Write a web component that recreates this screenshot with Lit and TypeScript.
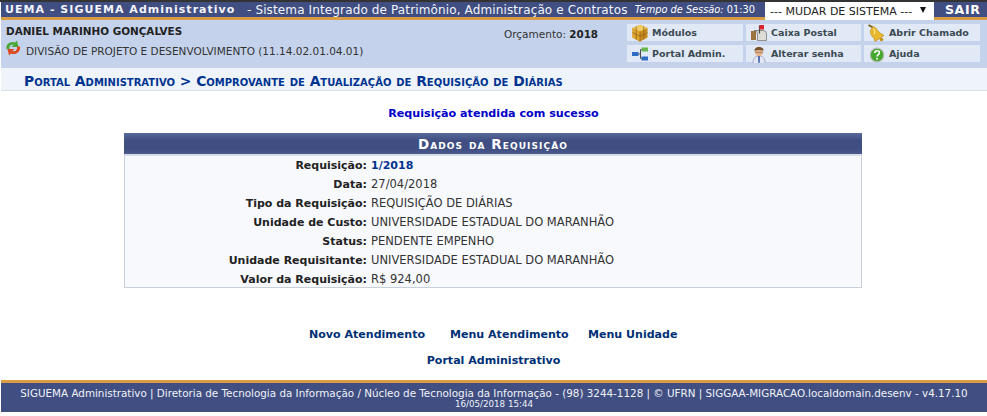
import { LitElement, html, css, svg } from "lit";
import { customElement } from "lit/decorators.js";

const icons: Record<string, unknown> = {
  box: svg`<path d="M1.500 4 9 .8 16.500 4v9.500L9 17.500l-7.500-4z" fill="#c98a1c"/><path d="M1.500 4 9 7.500v10l-7.500-4z" fill="#e0a52c"/><path d="M1.500 4 9 .8 16.500 4 9 7.500z" fill="#f0cc66"/><path d="M9 7.500v10M1.500 8.700 9 12.300l7.500-3.600M5.200 2.400v13.100M12.800 2.400v13.100" stroke="#94641a" stroke-width=".8" fill="none"/>`,
  mail: svg`<rect x="1" y="7" width="5" height="9" fill="#9b7440"/><path d="M4 6.500h9a3.500 3.500 0 0 1 3.500 3.500v6.500H7.500V10A3.500 3.500 0 0 0 4 6.500z" fill="#dcdcd8" stroke="#6f6b64" stroke-width=".7"/><path d="M9.500 1.500v8" stroke="#444" stroke-width="1.200"/><path d="M9.500 1h4.500v4.500H9.500z" fill="#d8262c"/>`,
  bell: svg`<path d="M.5 1 5 3.500" stroke="#7c5d18" stroke-width="2"/><path d="M4.500 3c3.500-.5 4.500 3 6.500 5s3.500 2 5 3.500L7 17.500c-.5-2-1-3.500-3-5.500S1.500 7 4.500 3z" fill="#e8b92f" stroke="#b78412" stroke-width=".6"/><path d="M5 5c1.500 0 2 2 1.500 5" stroke="#f8e48c" stroke-width="1.200" fill="none"/><circle cx="13.500" cy="15.500" r="1.800" fill="#c8921a"/>`,
  net: svg`<rect x="1" y="7" width="6.500" height="4" fill="#2f6cc6"/><rect x="10.500" y="2.500" width="6.500" height="4" fill="#68b850"/><rect x="10.500" y="11.500" width="6.500" height="4" fill="#2f6cc6"/><path d="M7.500 9h2M9.500 4.500v9h1M9.500 4.500h1" stroke="#3c3c3c" stroke-width=".9" fill="none"/>`,
  user: svg`<path d="M3 18.500c0-5 2-7.500 6-7.500s6 2.500 6 7.500z" fill="#e4e8f6" stroke="#7b83a8" stroke-width=".6"/><path d="M8 11h2l-.4 7.500H8.400z" fill="#3f5cab"/><ellipse cx="9" cy="6.500" rx="4.200" ry="4.800" fill="#e8b48a"/><path d="M4.500 6C4 .8 14 .5 13.500 5.500 10 5 8 4.500 4.500 6z" fill="#73522f"/><path d="M5 7.300h8" stroke="#5c5c5c" stroke-width=".6"/>`,
  help: svg`<circle cx="9" cy="10" r="6.800" fill="#46a82e" stroke="#b8bdb5" stroke-width="1.200"/><path d="M6.800 8c0-3 4.600-3 4.600-.2 0 2-2.300 1.800-2.300 3.800" stroke="#fff" stroke-width="1.600" fill="none"/><circle cx="9" cy="13.800" r="1" fill="#fff"/>`,
};

const menu = [
  ["box", "Módulos"],
  ["mail", "Caixa Postal"],
  ["bell", "Abrir Chamado"],
  ["net", "Portal Admin."],
  ["user", "Alterar senha"],
  ["help", "Ajuda"],
];

const rows: [string, string, boolean?][] = [
  ["Requisição:", "1/2018", true],
  ["Data:", "27/04/2018"],
  ["Tipo da Requisição:", "REQUISIÇÃO DE DIÁRIAS"],
  ["Unidade de Custo:", "UNIVERSIDADE ESTADUAL DO MARANHÃO"],
  ["Status:", "PENDENTE EMPENHO"],
  ["Unidade Requisitante:", "UNIVERSIDADE ESTADUAL DO MARANHÃO"],
  ["Valor da Requisição:", "R$ 924,00"],
];

@customElement("app-root")
export class AppRoot extends LitElement {
  static styles = css`
    :host {
      display: block;
      width: 987px;
      height: 416px;
      overflow: hidden;
      background: #fff;
      font-family: Verdana, "DejaVu Sans", sans-serif;
      font-size: 11px;
      color: #222;
    }
    .page { padding-left: 1px; border-top: 2px solid #333; display: flex; flex-direction: column; }
    .topbar {
      height: 15px;
      background: #404e82;
      border-bottom: 3px solid #d99c45;
      display: flex;
      align-items: center;
      color: #fff;
      white-space: nowrap;
    }
    .brand { font-weight: bold; font-size: 11px; letter-spacing: 1.030px; margin-left: 4px; width: 242px; color: #f2f4fa; }
    .subtitle { font-size: 12px; letter-spacing: .13px; width: 382px; color: #f2f4fa; }
    .timer { font-size: 9.800px; width: 126px; text-align: right; color: #fff; }
    .timer i { font-style: italic; }
    .select {
      width: 169px; margin-left: 10px; height: 18px; background: #fff; color: #222; font-size: 11px;
      display: flex; align-items: center; justify-content: space-between; padding: 0 5px; box-sizing: border-box;
      align-self: flex-start;
    }
    .arrow { width: 0; height: 0; border-left: 3px solid transparent; border-right: 3px solid transparent; border-top: 6px solid #111; margin-right: 3px; margin-top: -3px; }
    .exit { font-weight: bold; font-size: 12.500px; margin-left: 11px; letter-spacing: .6px; }
    .info {
      height: 48px;
      background: #c4d2eb;
      display: flex;
      position: relative;
    }
    .user { width: 500px; padding: 5px 0 0 5px; box-sizing: border-box; }
    .user b { display: block; font-size: 10.400px; line-height: 13px; color: #222; }
    .unit { display: flex; align-items: flex-start; font-size: 10.500px; margin-top: 2px; color: #333; line-height: 13px; white-space: nowrap; }
    .unit svg { width: 16px; height: 16px; flex: none; margin-right: 5px; margin-left: -1px; }
    .unit span { margin-top: 5px; }
    .budget { width: 126px; padding-top: 8px; padding-left: 3px; box-sizing: border-box; font-size: 10.500px; color: #333; line-height: 13px; }
    .budget b { color: #222; font-size: 10.300px; margin-left: 0; }
    .menu {
      display: grid; grid-template-columns: 116px 115px 116px; column-gap: 3px; row-gap: 4px;
      padding-top: 4px; align-self: flex-start;
    }
    .item {
      height: 17px; background: #e2e9f6; display: flex; align-items: center; font-size: 9.500px; font-weight: bold;
      color: #3a4a52; white-space: nowrap;
    }
    .item svg { width: 18px; height: 18px; margin-left: 4px; margin-right: 3px; flex: none; }
    .crumb {
      height: 22px; background: #eff3fa; border-bottom: 1px solid #d8dfea;
      display: flex; align-items: center; padding: 3px 0 0 23px; box-sizing: content-box; height: 19px;
      font-variant: small-caps; font-weight: bold; font-size: 13.850px; color: #003390; white-space: nowrap;
    }
    .ok { text-align: center; color: #0000c8; font-weight: bold; font-size: 11.130px; margin-top: 16px; line-height: 14px; padding-right: 1px; }
    .card { width: 738px; margin: 12px 0 0 123px; box-sizing: border-box; }
    .card-head {
      height: 21px; background: linear-gradient(#5a6a9a, #404e82 35%, #404e82 75%, #4a5a8c);
      color: #fff; font-weight: bold; font-variant: small-caps; font-size: 13.500px; letter-spacing: 1.080px;
      display: flex; align-items: center; justify-content: center;
    }
    .card-body { border: 1px solid #c8d0dc; border-top: 2px solid #d8dde8; background: #f8f9fd; height: 134px; box-sizing: border-box; display: grid; grid-template-columns: 242px 1fr; grid-auto-rows: 19px; }
    .label { text-align: right; font-weight: bold; color: #222; line-height: 19px; }
    .value { padding-left: 4px; line-height: 19px; color: #333; font-size: 11.500px; }
    .value.link { color: #003390; font-weight: bold; font-size: 11px; }
    .links { display: flex; margin-top: 40px; padding-left: 308px; font-weight: bold; color: #003075; font-size: 11.050px; line-height: 14px; }
    .links span:nth-child(1) { width: 141px; }
    .links span:nth-child(2) { width: 138px; }
    .portal { text-align: center; font-weight: bold; color: #003075; font-size: 11.050px; margin-top: 12px; line-height: 14px; padding-right: 1px; }
    .footer {
      margin-top: 12px; border-top: 3px solid #d99c45; background: #404e82; height: 32px; color: #f0f2f8; text-align: center;
      padding-top: 4px; box-sizing: border-box; font-size: 10.370px; line-height: 13px; white-space: nowrap;
    }
    .footer small { display: block; font-size: 8.700px; line-height: 9px; }
  `;

  render() {
    return html`<div class="page">
      <div class="topbar">
        <span class="brand">UEMA - SIGUEMA Administrativo</span>
        <span class="subtitle">- Sistema Integrado de Patrimônio, Administração e Contratos</span>
        <span class="timer"><i>Tempo de Sessão:</i> 01:30</span>
        <span class="select">--- MUDAR DE SISTEMA ---<span class="arrow"></span></span>
        <span class="exit">SAIR</span>
      </div>
      <div class="info">
        <div class="user">
          <b>DANIEL MARINHO GONÇALVES</b>
          <div class="unit">
            <svg viewBox="0 0 16 16"><path d="M1.500 9C.5 4 5.500.5 10 2.500L12 .5l1.500 6.500-7 0 2-2C6 4 4 6 4.500 9.500z" fill="#4aa83a"/><path d="M15 6.500c1 5.500-4.500 9-9 7l-2 2-1.500-6.500 7 0-2 2c3 1 5-1 4.500-4.500z" fill="#dc4a22"/></svg>
            <span>DIVISÃO DE PROJETO E DESENVOLVIMENTO (11.14.02.01.04.01)</span>
          </div>
        </div>
        <div class="budget">Orçamento: <b>2018</b></div>
        <div class="menu">
          ${menu.map(([icon, label]) => html`<div class="item"><svg viewBox="0 0 18 18">${icons[icon]}</svg>${label}</div>`)}
        </div>
      </div>
      <div class="crumb">Portal Administrativo &gt; Comprovante de Atualização de Requisição de Diárias</div>
      <div class="ok">Requisição atendida com sucesso</div>
      <div class="card">
        <div class="card-head">Dados da Requisição</div>
        <div class="card-body">
          ${rows.map(([l, v, link]) => html`<div class="label">${l}</div><div class="value ${link ? "link" : ""}">${v}</div>`)}
        </div>
      </div>
      <div class="links"><span>Novo Atendimento</span><span>Menu Atendimento</span><span>Menu Unidade</span></div>
      <div class="portal">Portal Administrativo</div>
      <div class="footer">SIGUEMA Administrativo | Diretoria de Tecnologia da Informação / Núcleo de Tecnologia da Informação - (98) 3244-1128 | © UFRN | SIGGAA-MIGRACAO.localdomain.desenv - v4.17.10<small>16/05/2018 15:44</small></div>
    </div>`;
  }
}
